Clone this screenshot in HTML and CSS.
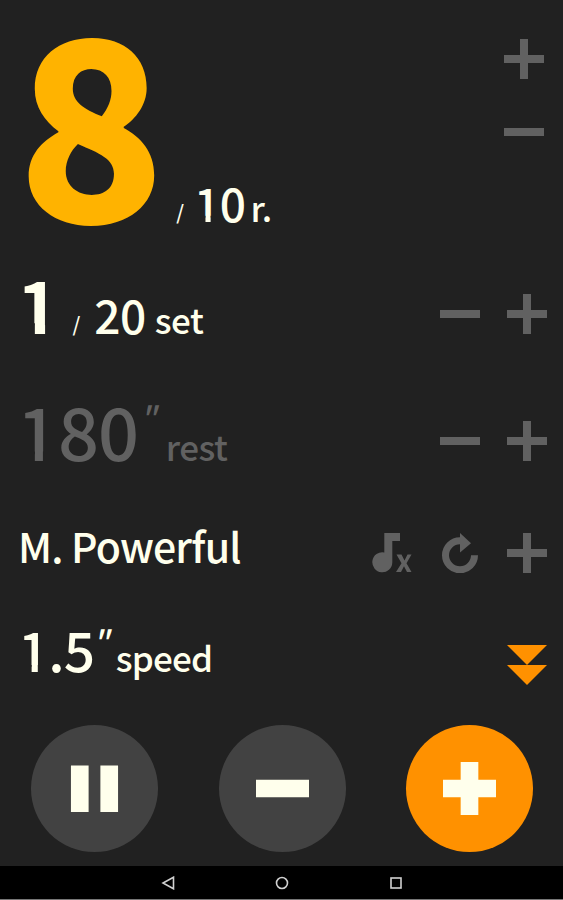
FILE: index.html
```
<!DOCTYPE html>
<html lang="en">
<head>
    <meta charset="UTF-8">
    <meta name="viewport" content="width=device-width, initial-scale=1.0">
    <title>Workout Counter</title>
    <link rel="stylesheet" href="styles.css">
</head>
<body>
    <div class="app">
        <div class="row row-reps">
            <div class="value">
                <span class="count">8</span>
                <span class="slash">/</span>
                <span class="total"><span class="one">1</span>0</span>
                <span class="unit">r.</span>
            </div>
            <div class="controls">
                <svg class="icon" viewBox="0 0 40 40"><path d="M16 0h8v16h16v8H24v16h-8V24H0v-8h16z"/></svg>
                <svg class="icon" viewBox="0 0 40 40"><path d="M0 16h40v8H0z"/></svg>
            </div>
        </div>

        <div class="row row-set">
            <div class="value">
                <span class="big"><span class="one one-bold">1</span></span>
                <span class="slash">/</span>
                <span class="total">20</span>
                <span class="unit">set</span>
            </div>
            <div class="controls">
                <svg class="icon" viewBox="0 0 40 40"><path d="M0 16h40v8H0z"/></svg>
                <svg class="icon" viewBox="0 0 40 40"><path d="M16 0h8v16h16v8H24v16h-8V24H0v-8h16z"/></svg>
            </div>
        </div>

        <div class="row row-rest">
            <div class="value">
                <span class="big"><span class="one">1</span>80</span>
                <span class="seconds">"</span>
                <span class="unit">rest</span>
            </div>
            <div class="controls">
                <svg class="icon" viewBox="0 0 40 40"><path d="M0 16h40v8H0z"/></svg>
                <svg class="icon" viewBox="0 0 40 40"><path d="M16 0h8v16h16v8H24v16h-8V24H0v-8h16z"/></svg>
            </div>
        </div>

        <div class="row row-music">
            <div class="value">
                <span class="track">M. Powerful</span>
            </div>
            <div class="controls">
                <svg class="icon" viewBox="0 0 40 40">
                    <path d="M12.300 0H28v8h-7.700v21.500A10 10 0 1 1 12.300 19.400z"/>
                    <path d="M24.500 21.500h5l3 6 3-6h4l-5 8.700 5 8.800H35l-3-5.700-3 5.700h-5l5.500-8.800z"/>
                </svg>
                <svg class="icon" viewBox="0 0 40 40">
                    <path class="ring" d="M20 7.800A14.500 14.500 0 1 0 34.500 22.300"/>
                    <path d="M20 0l11 10.300L20 19.500z"/>
                </svg>
                <svg class="icon" viewBox="0 0 40 40"><path d="M16 0h8v16h16v8H24v16h-8V24H0v-8h16z"/></svg>
            </div>
        </div>

        <div class="row row-speed">
            <div class="value">
                <span class="medium"><span class="one">1</span>.5</span>
                <span class="seconds">"</span>
                <span class="unit">speed</span>
            </div>
            <div class="controls">
                <svg class="icon orange" viewBox="0 0 40 40"><path d="M0 0h40L20 20zM0 20h40L20 40z"/></svg>
            </div>
        </div>

        <div class="buttons">
            <button class="round">
                <svg viewBox="0 0 54 54"><path d="M3 3.500h18v47.500H3zM33 3.500h18v47.500H33z"/></svg>
            </button>
            <button class="round">
                <svg viewBox="0 0 54 54"><path d="M0 18h54v18H0z"/></svg>
            </button>
            <button class="round round-plus">
                <svg viewBox="0 0 54 54"><path d="M18 0h18v18h18v18H36v18H18V36H0V18h18z"/></svg>
            </button>
        </div>

        <div class="navbar">
            <svg viewBox="0 0 14 14"><path d="M12.500 1.200v11.600L2 7z"/></svg>
            <svg viewBox="0 0 14 14"><circle cx="7" cy="7" r="5.500"/></svg>
            <svg viewBox="0 0 14 14"><rect x="2" y="2" width="10" height="10"/></svg>
        </div>
    </div>
</body>
</html>
```
FILE: styles.css
```
body {
    margin: 0;
    background-color: #212121;
    color: #ffffec;
    font-family: "Noto Sans CJK JP", "Noto Sans", sans-serif;
    font-weight: 500;
}
.app {
    display: flex;
    flex-direction: column;
    height: 900px;
}
.row {
    display: flex;
    justify-content: space-between;
    box-sizing: border-box;
    padding: 0 16px 0 20px;
}
.value {
    display: flex;
    align-items: baseline;
    white-space: nowrap;
}
.controls {
    display: flex;
    gap: 27px;
}
.icon {
    width: 40px;
    height: 40px;
    fill: #616161;
}
.ring {
    fill: none;
    stroke: #616161;
    stroke-width: 7;
}
.orange {
    fill: #ff9100;
}

/* text sizes */
.count {
    font-size: 250px;
    line-height: 200px;
    font-weight: 900;
    color: #ffb300;
    margin-left: -3px;
    transform: translateY(1px) scaleX(0.975);
    transform-origin: left;
}
.big {
    font-size: 72px;
    line-height: 72px;
    letter-spacing: -1px;
}
.medium {
    font-size: 55px;
    line-height: 72px;
    letter-spacing: -1px;
}
.total {
    font-size: 46px;
    line-height: 46px;
    letter-spacing: -0.5px;
}
.unit {
    font-size: 35px;
    line-height: 36px;
    letter-spacing: -0.5px;
}
.track {
    font-size: 41px;
    line-height: 60px;
    letter-spacing: -0.8px;
    margin-left: -2px;
}
.slash {
    font-size: 20px;
    line-height: 20px;
    transform: translateY(-2px);
}
.seconds {
    font-size: 32px;
    line-height: 32px;
    font-style: italic;
}

/* plain "1": trims the foot of the digit down to the stem */
.one {
    display: inline-block;
    line-height: 1em;
    margin: 0 0 0 -2px;
    clip-path: polygon(0 0, 100% 0, 100% 0.8em, 0.36em 0.8em, 0.36em 100%, 0.248em 100%, 0.248em 0.8em, 0 0.8em);
}
.big .one {
    margin: 0 1px 0 -3px;
}
.one-bold {
    font-weight: 700;
    clip-path: polygon(0 0, 100% 0, 100% 0.78em, 0.39em 0.78em, 0.39em 100%, 0.248em 100%, 0.248em 0.78em, 0 0.78em);
}

/* rows */
.row-reps {
    height: 267px;
    padding-top: 13px;
    padding-right: 19px;
}
.row-reps .controls {
    flex-direction: column;
    gap: 33px;
    padding-top: 26px;
}
.row-reps .slash {
    margin-left: 7px;
}
.row-reps .total {
    margin-left: 12px;
}
.row-reps .unit {
    margin-left: 5px;
}
.row-set {
    height: 127px;
}
.row-set .controls,
.row-rest .controls {
    padding-top: 27px;
}
.row-set .slash {
    margin-left: 13px;
}
.row-set .total {
    margin-left: 14px;
}
.row-set .unit {
    margin-left: 9px;
}
.row-rest {
    height: 121px;
}
.row-rest .value {
    color: #616161;
}
.row-rest .seconds {
    transform: translateY(-31px);
    margin-left: 1px;
}
.row-rest .unit {
    margin-left: 10px;
}
.row-music {
    height: 97px;
}
.row-music .controls {
    padding-top: 18px;
    gap: 27.5px;
}
.row-speed {
    height: 113px;
}
.row-speed .seconds {
    transform: translateY(-18px);
    margin-left: -2px;
}
.row-speed .unit {
    margin-left: 7px;
    letter-spacing: -0.8px;
}
.row-speed .controls {
    padding-top: 33px;
}

/* bottom buttons */
.buttons {
    display: flex;
    justify-content: space-between;
    height: 141px;
    padding: 0 30px 0 31px;
    box-sizing: border-box;
}
.round {
    display: flex;
    align-items: center;
    justify-content: center;
    width: 127px;
    height: 127px;
    padding: 0;
    border: none;
    border-radius: 50%;
    background-color: #424242;
}
.round svg {
    width: 53px;
    height: 53px;
    fill: #ffffec;
}
.round-plus {
    background-color: #ff9100;
}

/* android navigation bar */
.navbar {
    display: flex;
    align-items: center;
    justify-content: center;
    gap: 100px;
    height: 33px;
    background-color: #000;
    border-bottom: 1px solid #777;
}
.navbar svg {
    width: 14px;
    height: 14px;
    fill: none;
    stroke: #d0d0d0;
    stroke-width: 1.6;
}
```
